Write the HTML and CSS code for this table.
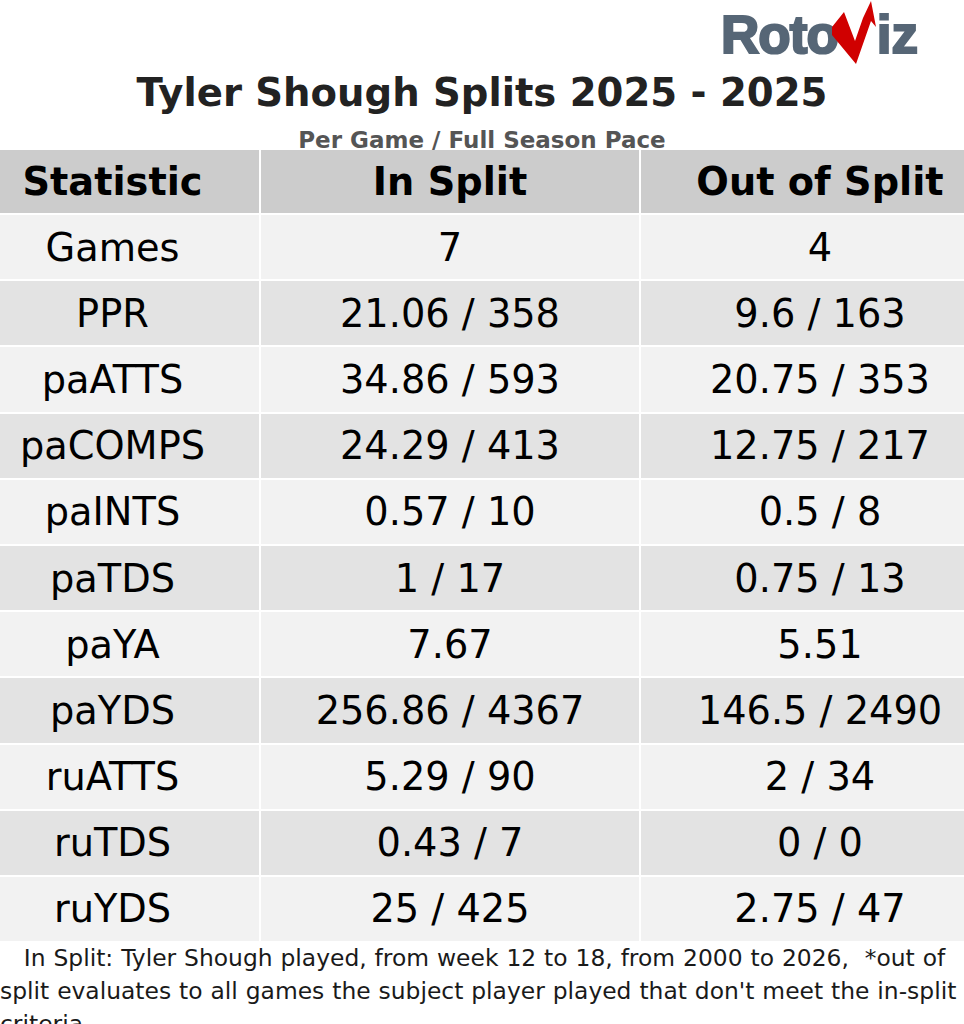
FILE: index.html
```html
<!DOCTYPE html>
<html>
<head>
<meta charset="utf-8">
<link rel="stylesheet" href="styles.css">
</head>
<body>
<div class="page">
  <div class="logo-row">
    <div class="logo">
      <span class="logo-text">Roto</span>
      <svg class="logo-v" viewBox="0 0 46 66" width="46" height="66">
        <polygon points="2,27 14,12 25,41 33,18 41,1 46,27 41,21 26,64 2,35" fill="#d00000"/>
      </svg>
      <span class="logo-text logo-iz">iz</span>
    </div>
  </div>
  <h1 class="title">Tyler Shough Splits 2025 - 2025</h1>
  <div class="subtitle">Per Game / Full Season Pace</div>
  <div class="table-wrap">
    <div class="grid">
      <div class="cell head">Statistic</div><div class="cell head">In Split</div><div class="cell head">Out of Split</div>
      <div class="cell odd">Games</div><div class="cell odd">7</div><div class="cell odd">4</div>
      <div class="cell even">PPR</div><div class="cell even">21.06 / 358</div><div class="cell even">9.6 / 163</div>
      <div class="cell odd">paATTS</div><div class="cell odd">34.86 / 593</div><div class="cell odd">20.75 / 353</div>
      <div class="cell even">paCOMPS</div><div class="cell even">24.29 / 413</div><div class="cell even">12.75 / 217</div>
      <div class="cell odd">paINTS</div><div class="cell odd">0.57 / 10</div><div class="cell odd">0.5 / 8</div>
      <div class="cell even">paTDS</div><div class="cell even">1 / 17</div><div class="cell even">0.75 / 13</div>
      <div class="cell odd">paYA</div><div class="cell odd">7.67</div><div class="cell odd">5.51</div>
      <div class="cell even">paYDS</div><div class="cell even">256.86 / 4367</div><div class="cell even">146.5 / 2490</div>
      <div class="cell odd">ruATTS</div><div class="cell odd">5.29 / 90</div><div class="cell odd">2 / 34</div>
      <div class="cell even">ruTDS</div><div class="cell even">0.43 / 7</div><div class="cell even">0 / 0</div>
      <div class="cell odd">ruYDS</div><div class="cell odd">25 / 425</div><div class="cell odd">2.75 / 47</div>
    </div>
  </div>
  <div class="footer">   In Split: Tyler Shough played, from week 12 to 18, from 2000 to 2026,  *out of split evaluates to all games the subject player played that don't meet the in&#8209;split criteria</div>
</div>
</body>
</html>
```

FILE: styles.css
```css
html, body {
  margin: 0;
  padding: 0;
  background: #ffffff;
}
.page {
  width: 964px;
  height: 1024px;
  overflow: hidden;
  font-family: "DejaVu Sans", "Noto Sans", sans-serif;
}
.logo-row {
  height: 68px;
  display: flex;
  justify-content: flex-end;
  padding-right: 46px;
}
.logo {
  display: flex;
  align-items: flex-start;
}
.logo-text {
  font-family: "Liberation Sans", Arial, sans-serif;
  font-weight: bold;
  font-size: 53px;
  line-height: 53px;
  letter-spacing: -1px;
  color: #566676;
  -webkit-text-stroke: 2.2px #566676;
  margin-top: 8px;
}
.logo-v {
  margin-left: -8px;
  margin-right: 1px;
  display: block;
}
.logo-iz {
  letter-spacing: 0;
}
.title {
  margin: 0;
  text-align: center;
  font-size: 38.6px;
  line-height: 50px;
  font-weight: bold;
  color: #222222;
}
.subtitle {
  text-align: center;
  font-size: 23px;
  line-height: 32px;
  padding-top: 6px;
  margin-bottom: -6px;
  font-weight: bold;
  color: #555555;
}
.table-wrap {
  width: 964px;
  overflow: hidden;
  position: relative;
}
.grid {
  display: grid;
  grid-template-columns: 293px 378px 358px;
  grid-template-rows: 63px;
  grid-auto-rows: 64.2px;
  gap: 2px;
  margin-left: -34px;
  width: 1033px;
  background: #ffffff;
}
.cell {
  display: flex;
  align-items: center;
  justify-content: center;
  font-size: 38.3px;
  color: #000000;
  white-space: nowrap;
}
.head {
  background: #cccccc;
  font-weight: bold;
}
.odd {
  background: #f2f2f2;
}
.even {
  background: #e3e3e3;
}
.footer {
  white-space: pre-wrap;
  font-size: 23.4px;
  word-spacing: 0.5px;
  line-height: 33px;
  color: #1a1a1a;
  margin-top: 1px;
}
```
